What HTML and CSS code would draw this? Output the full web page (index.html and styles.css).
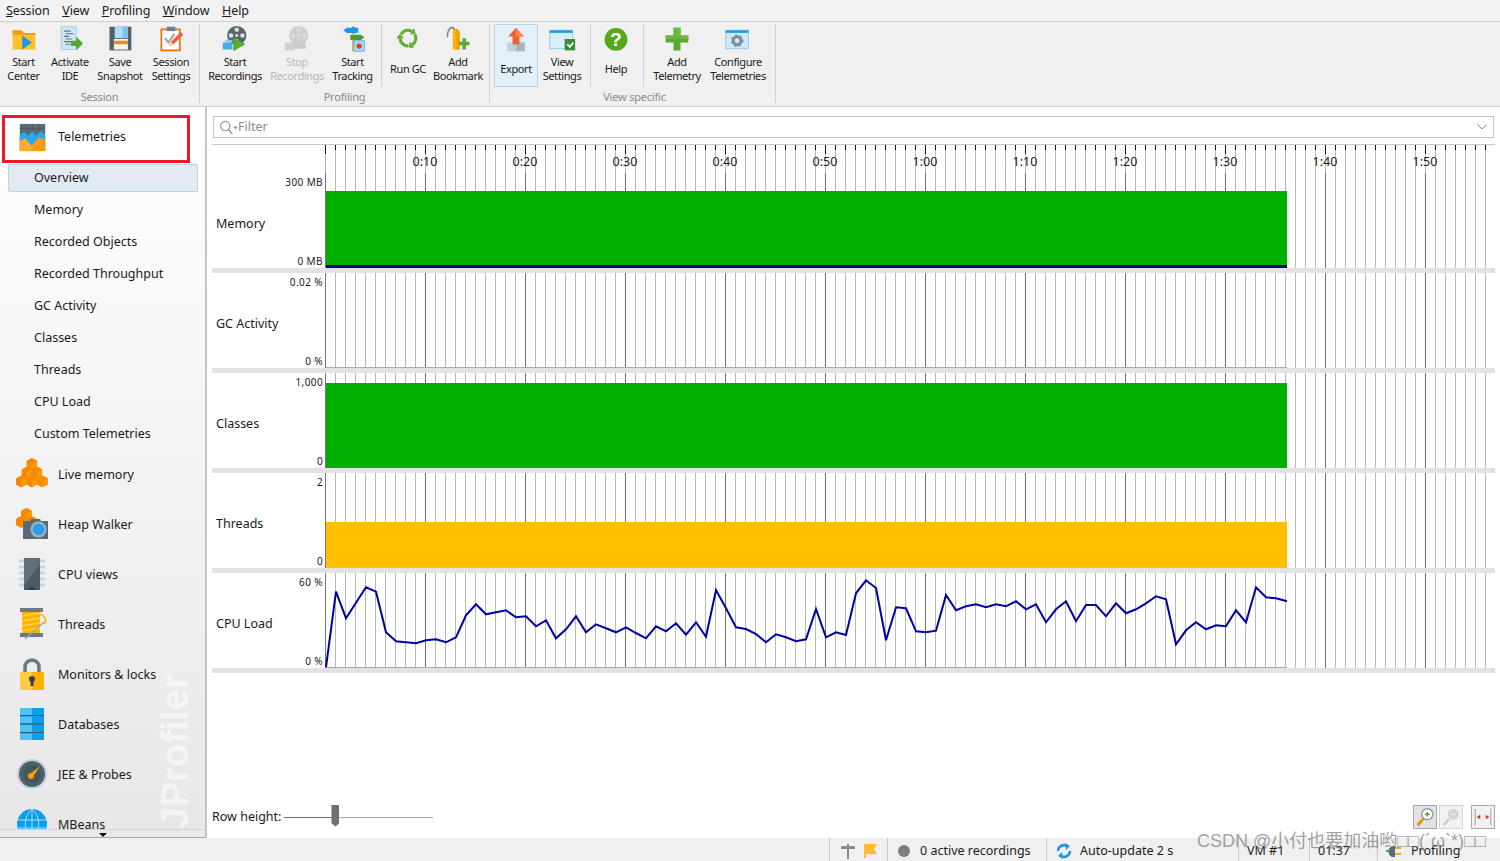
FILE: index.html
```html
<!DOCTYPE html>
<html lang="en">
  <head>
    <meta charset="UTF-8" />
    <title>JProfiler - Telemetries</title>
    <link rel="stylesheet" href="styles.css">
  </head>
  <body>
    <svg class="defs" aria-hidden="true">
      <symbol id="cube" viewBox="0 0 11 12">
        <polygon points="5.5,0 11,3 11,9 5.5,12 0,9 0,3" fill="#ff9a0a" />
        <polygon points="5.5,0 11,3 5.5,6 5.5,12 0,9 0,3" fill="#f58a05" />
      </symbol>
      <symbol id="reel" viewBox="0 0 32 32">
        <circle cx="18" cy="12" r="11" fill="currentColor" />
        <circle cx="18" cy="5.5" r="2.6" fill="#d8dde0" />
        <circle cx="18" cy="18.5" r="2.6" fill="#d8dde0" />
        <circle cx="11.5" cy="12" r="2.6" fill="#d8dde0" />
        <circle cx="24.5" cy="12" r="2.6" fill="#d8dde0" />
        <circle cx="18" cy="12" r="1.8" fill="#d8dde0" />
      </symbol>
      <symbol id="gc-arm" viewBox="0 0 32 32">
        <path d="M8.200 10.500A9 9 0 0 1 20.500 7.200" fill="none" stroke="#63ae2e" stroke-width="3.600" />
        <path d="M24.900 9.700L22.750 3.300 18.250 11.100z" fill="#63ae2e" />
      </symbol>
    </svg>

    <nav class="menubar">
      <span class="menu"><u>S</u>ession</span>
      <span class="menu"><u>V</u>iew</span>
      <span class="menu"><u>P</u>rofiling</span>
      <span class="menu"><u>W</u>indow</span>
      <span class="menu"><u>H</u>elp</span>
    </nav>

    <header class="toolbar">
      <section class="group group-session">
        <div class="tools">
          <div class="tool">
            <svg class="tool-icon" viewBox="0 0 32 32">
              <path d="M3 6h10l3 3h13v19H3z" fill="#fbc02d" />
              <path d="M3 6h10l3 3h13v2H3z" fill="#f59e0b" />
              <path d="M14 12l11 8-11 8z" fill="#1e96e6" />
            </svg>
            <span class="tool-label">Start<br>Center</span>
          </div>
          <div class="tool">
            <svg class="tool-icon" viewBox="0 0 32 32">
              <path d="M6 2h17v26H6z" fill="#cfe8f7" stroke="#9cc7e0" />
              <path d="M9 7h8M11 10h9M9 13h6M11 16h7M9 19h8M11 22h5" stroke="#64747f" stroke-width="1.2" />
              <path d="M17 18h6v-5l8 8-8 8v-5h-6z" fill="#5aa832" />
            </svg>
            <span class="tool-label">Activate<br>IDE</span>
          </div>
          <div class="tool">
            <svg class="tool-icon" viewBox="0 0 32 32">
              <path d="M4 2h25v27H4z" fill="#52616b" />
              <path d="M10 2h15v13H10z" fill="#a9dcf7" />
              <path d="M19 2h6v13h-6z" fill="#7cc6ee" />
              <path d="M9 16h16v12H9z" fill="#f4f4f4" />
              <path d="M9 18h16v4H9z" fill="#f58a05" />
            </svg>
            <span class="tool-label">Save<br>Snapshot</span>
          </div>
          <div class="tool">
            <svg class="tool-icon" viewBox="0 0 32 32">
              <path d="M5 5h21v24H5z" fill="#fff" stroke="#e8730c" stroke-width="2" />
              <path d="M11 2h10v5H11z" fill="#74828c" />
              <path d="M9 15l4 5 7-10" fill="none" stroke="#9aa7b0" stroke-width="2.4" />
              <path d="M14 24l2-5 11-11 3 3-11 11z" fill="#f0603a" />
              <path d="M14 24l2-5 3 3z" fill="#f9d48a" />
            </svg>
            <span class="tool-label">Session<br>Settings</span>
          </div>
        </div>
        <div class="group-name">Session</div>
      </section>

      <section class="group group-profiling">
        <div class="tools">
          <div class="tool">
            <svg class="tool-icon" viewBox="0 0 32 32">
              <use href="#reel" class="reel-dark" width="32" height="32" />
              <path d="M2 20h11v8H2z" fill="#4aa8e8" />
              <path d="M5 17h8v3H5z" fill="#82c8f2" />
              <path d="M14 14l14 8-14 8z" fill="#5aa832" />
            </svg>
            <span class="tool-label">Start<br>Recordings</span>
          </div>
          <div class="tool tool-disabled">
            <svg class="tool-icon" viewBox="0 0 32 32">
              <use href="#reel" class="reel-off" width="32" height="32" />
              <path d="M2 20h11v9H2z" fill="#d0d0d0" />
              <path d="M12 18h14v9H12z" fill="#cbcbcb" />
            </svg>
            <span class="tool-label">Stop<br>Recordings</span>
          </div>
          <div class="tool">
            <svg class="tool-icon" viewBox="0 0 32 32">
              <path d="M15 2h3v8h-3z" fill="#7d6a50" />
              <path d="M5 6l4-3h13v6H9z" fill="#1e96e6" />
              <path d="M13 11h12l4 3-4 3H13z" fill="#4f9a2f" />
              <path d="M15 17h3v13h-3z" fill="#e8a23a" />
              <path d="M17 18h12v12H17z" fill="#a6dcf7" stroke="#4fb0e8" />
              <circle cx="23" cy="24" r="3" fill="#e33b2a" />
            </svg>
            <span class="tool-label">Start<br>Tracking</span>
          </div>
          <i class="tool-sep"></i>
          <div class="tool">
            <svg class="tool-icon" viewBox="0 0 32 32">
              <use href="#gc-arm" width="32" height="32" />
              <use href="#gc-arm" width="32" height="32" transform="rotate(120 16 15)" />
              <use href="#gc-arm" width="32" height="32" transform="rotate(240 16 15)" />
            </svg>
            <span class="tool-label tool-label-mid">Run GC</span>
          </div>
          <div class="tool">
            <svg class="tool-icon" viewBox="0 0 32 32">
              <path d="M4 14c-1-6 3-12 6-11 2 .5 2 3 2 5" fill="none" stroke="#7d8a92" stroke-width="2" />
              <path d="M10 7l4-3 4 3v21h-8z" fill="#ffb300" />
              <path d="M14 4l4 3v21h-4z" fill="#f59e0b" />
              <path d="M18 16h4v-4h4v4h4v4h-4v5h-4v-5h-4z" fill="#5aa832" transform="translate(-1 3)" />
            </svg>
            <span class="tool-label">Add<br>Bookmark</span>
          </div>
        </div>
        <div class="group-name">Profiling</div>
      </section>

      <section class="group group-view">
        <div class="tools">
          <div class="tool tool-active">
            <svg class="tool-icon" viewBox="0 0 32 32">
              <path d="M6 20h20v10H6z" fill="#c5d0d6" />
              <path d="M16 20h10v10H16z" fill="#a8b6bf" />
              <path d="M16 3l9 10h-5v9h-8v-9H7z" fill="#f4602c" />
              <path d="M16 3l9 10h-9z" fill="#f98a4a" />
            </svg>
            <span class="tool-label tool-label-mid">Export</span>
          </div>
          <div class="tool">
            <svg class="tool-icon" viewBox="0 0 32 32">
              <path d="M2 6h26v21H2z" fill="#d8eefa" stroke="#8ccbee" />
              <path d="M2 6h26v3H2z" fill="#1e9be8" />
              <path d="M19 16h12v13H19z" fill="#3a8a3c" />
              <path d="M22 22l3 3 4-5" fill="none" stroke="#fff" stroke-width="2" />
            </svg>
            <span class="tool-label">View<br>Settings</span>
          </div>
          <i class="tool-sep"></i>
          <div class="tool">
            <svg class="tool-icon" viewBox="0 0 32 32">
              <circle cx="16" cy="16.500" r="13" fill="#55a818" />
              <text x="16" y="24" class="help-mark">?</text>
            </svg>
            <span class="tool-label tool-label-mid">Help</span>
          </div>
          <i class="tool-sep"></i>
          <div class="tool">
            <svg class="tool-icon" viewBox="0 0 32 32">
              <path d="M12 3h8v9h9v8h-9v9h-8v-9H3v-8h9z" fill="#5aa832" />
              <path d="M12 3h8v9h9v4H3v-4h9z" fill="#6cb83c" />
            </svg>
            <span class="tool-label">Add<br>Telemetry</span>
          </div>
          <div class="tool">
            <svg class="tool-icon" viewBox="0 0 32 32">
              <path d="M2 6h26v21H2z" fill="#cfe9f9" stroke="#8ccbee" />
              <path d="M2 6h26v3H2z" fill="#1e9be8" />
              <circle cx="15" cy="18" r="4.500" fill="none" stroke="#7c8d98" stroke-width="3.500" />
              <circle cx="15" cy="18" r="6.500" fill="none" stroke="#7c8d98" stroke-width="1.500" stroke-dasharray="2.500 3" />
            </svg>
            <span class="tool-label">Configure<br>Telemetries</span>
          </div>
        </div>
        <div class="group-name">View specific</div>
      </section>
    </header>

    <div class="workspace">
      <aside class="sidebar">
        <div class="nav-head">
          <svg class="nav-icon" viewBox="0 0 32 32">
            <path d="M2 1h28v30H2z" fill="#5b6b75" />
            <path d="M2 13l5-3 4 4 5-5 4 5 5-5 5 3v18H2z" fill="#29a8ee" />
            <path d="M2 20l6-3 7 8 8-9 7 2v13H2z" fill="#ff9a0a" />
            <path d="M2 20l6-3 7 8v6H2z" fill="#ffad33" />
            <path d="M2 6h28M9 1v9M16 1v8M23 1v8" stroke="#4b5962" stroke-width="1" />
          </svg>
          <span>Telemetries</span>
        </div>
        <ul class="sub-list">
          <li class="sub-item sub-item-selected">Overview</li>
          <li class="sub-item">Memory</li>
          <li class="sub-item">Recorded Objects</li>
          <li class="sub-item">Recorded Throughput</li>
          <li class="sub-item">GC Activity</li>
          <li class="sub-item">Classes</li>
          <li class="sub-item">Threads</li>
          <li class="sub-item">CPU Load</li>
          <li class="sub-item">Custom Telemetries</li>
        </ul>
        <ul class="nav-list">
          <li class="nav-item">
            <svg class="nav-icon" viewBox="0 0 32 32">
              <use href="#cube" x="10.500" y="0" width="11" height="12" />
              <use href="#cube" x="5.500" y="8.500" width="11" height="12" />
              <use href="#cube" x="15.500" y="8.500" width="11" height="12" />
              <use href="#cube" x="0" y="17.500" width="11" height="12" />
              <use href="#cube" x="10.500" y="17.500" width="11" height="12" />
              <use href="#cube" x="21" y="17.500" width="11" height="12" />
            </svg>
            <span>Live memory</span>
          </li>
          <li class="nav-item">
            <svg class="nav-icon" viewBox="0 0 32 32">
              <use href="#cube" x="5" y="0" width="11" height="12" />
              <use href="#cube" x="0" y="8" width="11" height="12" />
              <use href="#cube" x="10" y="8" width="11" height="12" />
              <path d="M7 13h7l1-2h9l1 2h7v18H7z" fill="#5b6b75" />
              <circle cx="22.500" cy="21.500" r="8" fill="#aab6bd" />
              <circle cx="22.500" cy="21.500" r="6" fill="#2a9df0" />
            </svg>
            <span>Heap Walker</span>
          </li>
          <li class="nav-item">
            <svg class="nav-icon" viewBox="0 0 32 32">
              <path d="M3 3h26M3 9h26M3 15h26M3 21h26M3 27h26" stroke="#cdd5da" stroke-width="3" />
              <path d="M8 0h16v32H8z" fill="#4c5b65" />
              <path d="M8 28L24 6V0H8z" fill="#5f6e78" />
              <path d="M13 32a3 3 0 0 1 6 0z" fill="#2f3a41" />
            </svg>
            <span>CPU views</span>
          </li>
          <li class="nav-item">
            <svg class="nav-icon" viewBox="0 0 32 32">
              <path d="M4 0h23v4H4zM4 25h23v4H4z" fill="#6a7a84" />
              <path d="M6 4h18v21H6z" fill="#ffb300" />
              <path d="M6 8l18-3M6 13l18-3M6 18l18-3M6 23l18-3" stroke="#ffd54f" stroke-width="1.500" />
              <path d="M9 31L28 14" stroke="#9aa7b0" stroke-width="1.500" />
              <path d="M24 6c6 2 7 8 4 10" fill="none" stroke="#ffb300" stroke-width="1.500" />
            </svg>
            <span>Threads</span>
          </li>
          <li class="nav-item">
            <svg class="nav-icon" viewBox="0 0 32 32">
              <path d="M9 15V9a7 7 0 0 1 14 0v6" fill="none" stroke="#6a7a84" stroke-width="3.500" />
              <path d="M4 14h24v18H4z" fill="#ffb300" />
              <path d="M4 14h12v18H4z" fill="#ffcc40" />
              <circle cx="16" cy="21" r="3" fill="#37424a" />
              <path d="M14.500 22h3v6h-3z" fill="#37424a" />
            </svg>
            <span>Monitors &amp; locks</span>
          </li>
          <li class="nav-item">
            <svg class="nav-icon" viewBox="0 0 32 32">
              <path d="M4 0h24v32H4z" fill="#0f9ce8" />
              <path d="M4 0h12v7H4zM4 8.500h12v7H4zM4 17h12v7H4zM4 25.500h12V32H4z" fill="#4fc3f7" />
              <path d="M4 7.500h24M4 16h24M4 24.500h24" stroke="#37576b" stroke-width="1" />
            </svg>
            <span>Databases</span>
          </li>
          <li class="nav-item">
            <svg class="nav-icon" viewBox="0 0 32 32">
              <circle cx="16" cy="16" r="15" fill="#c5d0d6" />
              <circle cx="16" cy="16" r="13" fill="#50606a" />
              <circle cx="16" cy="16" r="9" fill="#445560" />
              <path d="M13 17l11-9-7 11z" fill="#ffa000" />
              <circle cx="15" cy="18" r="3" fill="#ffa000" />
            </svg>
            <span>JEE &amp; Probes</span>
          </li>
          <li class="nav-item">
            <svg class="nav-icon" viewBox="0 0 32 32">
              <circle cx="16" cy="16" r="15" fill="#0f9ce8" />
              <path d="M1 12h30M1 20h30M16 1v30M16 1c-9 8-9 22 0 30M16 1c9 8 9 22 0 30" fill="none" stroke="#a9def8" stroke-width="1" />
            </svg>
            <span>MBeans</span>
          </li>
        </ul>
        <div class="brand-mark">JProfiler</div>
        <div class="nav-more"><i class="nav-more-arrow"></i></div>
      </aside>

      <main class="content">
        <div class="filter">
          <svg class="filter-icon" viewBox="0 0 20 16">
            <circle cx="6.500" cy="6.500" r="5" fill="none" stroke="#8c9aa3" stroke-width="1.200" />
            <path d="M10 10l4 5" stroke="#8c9aa3" stroke-width="1.500" />
            <path d="M15 7h5l-2.500 3z" fill="#8c9aa3" />
          </svg>
          <span class="filter-text">Filter</span>
          <svg class="filter-chevron" viewBox="0 0 10 6">
            <path d="M.5.500L5 5 9.500.500" fill="none" stroke="#8a8a8a" stroke-width="1" />
          </svg>
        </div>

        <div class="chart">
          <div class="ruler-row">
            <div class="ruler">
              <span class="time">0:10</span><span class="time">0:20</span><span class="time">0:30</span><span class="time">0:40</span><span class="time">0:50</span><span class="time">1:00</span><span class="time">1:10</span><span class="time">1:20</span><span class="time">1:30</span><span class="time">1:40</span><span class="time">1:50</span>
            </div>
          </div>

          <div class="row">
            <div class="row-head">
              <span class="scale">300 MB</span>
              <span class="row-name">Memory</span>
              <span class="scale">0 MB</span>
            </div>
            <div class="lane"><div class="bar bar-memory"></div></div>
          </div>

          <div class="row">
            <div class="row-head">
              <span class="scale">0.02 %</span>
              <span class="row-name">GC Activity</span>
              <span class="scale">0 %</span>
            </div>
            <div class="lane"><div class="baseline"></div></div>
          </div>

          <div class="row">
            <div class="row-head">
              <span class="scale">1,000</span>
              <span class="row-name">Classes</span>
              <span class="scale">0</span>
            </div>
            <div class="lane"><div class="bar bar-classes"></div></div>
          </div>

          <div class="row">
            <div class="row-head">
              <span class="scale">2</span>
              <span class="row-name">Threads</span>
              <span class="scale">0</span>
            </div>
            <div class="lane"><div class="bar bar-threads"></div></div>
          </div>

          <div class="row">
            <div class="row-head">
              <span class="scale">60 %</span>
              <span class="row-name">CPU Load</span>
              <span class="scale">0 %</span>
            </div>
            <div class="lane">
              <svg class="cpu-line" viewBox="0 0 1170 95">
                <path d="M1 94.500H962" stroke="#80cc80" stroke-width="1" />
                <polyline fill="none" stroke="#0000aa" stroke-width="2" points="1,94 11,18.700 21,45.300 31,29.700 41,14.300 51,18.700 61,59.300 71,68.300 81,69.300 91,70.300 101,67.300 111,66.300 121,69.300 131,64.300 141,42.300 151,31.300 161,41.300 171,39.300 181,37.300 191,44.300 201,43.300 211,53.300 221,47.300 231,65.300 241,56.300 251,43.300 261,59.300 271,51.300 281,55.300 291,59.300 301,54.300 311,60 321,65.300 331,53.300 341,58.300 351,50.300 361,61.700 371,49.300 381,63.700 391,17 401,35.300 411,54.300 421,56 431,61 441,69.300 451,61.300 461,64.300 471,68.300 481,66.300 491,36 501,64.300 511,59.300 521,62 531,20.300 541,7.300 551,15 561,67.300 571,34.300 581,35.300 591,58.300 601,59.300 611,57.700 621,22 631,37.300 641,33.300 651,31.300 661,34.300 671,31.300 681,33.300 691,28.300 701,36.300 711,31.300 721,49.300 731,36.300 741,28.300 751,48.300 761,32 771,32 781,43.300 791,30.300 801,40.300 811,36.300 821,30.300 831,23.300 841,26.300 851,71.300 861,57.300 871,49.300 881,56.300 891,52.300 901,53.300 911,37.300 921,49.300 931,14.300 941,24.300 951,25.300 962,28.300" />
              </svg>
            </div>
          </div>
        </div>

        <div class="chart-footer">
          <span class="row-height">Row height:</span>
          <div class="slider"><i class="slider-done"></i><i class="slider-thumb"></i></div>
          <div class="zoom-buttons">
            <button class="zoom-btn" type="button">
              <svg viewBox="0 0 24 24">
                <circle cx="14.500" cy="9" r="6" fill="#fff" stroke="#8c9aa3" stroke-width="1.500" />
                <path d="M12 9h5M14.500 6.500v5" stroke="#4aa02c" stroke-width="1.500" />
                <path d="M4 21l6-7" stroke="#f08c00" stroke-width="3" />
              </svg>
            </button>
            <button class="zoom-btn zoom-btn-off" type="button">
              <svg viewBox="0 0 24 24">
                <circle cx="14.500" cy="9" r="6" fill="#d4d4d4" />
                <path d="M12 9h5" stroke="#f2f2f2" stroke-width="1.500" />
                <path d="M4 21l6-7" stroke="#cfcfcf" stroke-width="3" />
              </svg>
            </button>
            <button class="zoom-btn zoom-btn-fit" type="button">
              <svg viewBox="0 0 24 24">
                <path d="M3.500 3v18M20.500 3v18" stroke="#8c9aa3" stroke-width="1" />
                <path d="M5 12l4-2.500v5zM19 12l-4-2.500v5z" fill="#d8352a" />
              </svg>
            </button>
          </div>
        </div>
      </main>
    </div>

    <footer class="statusbar">
      <div class="cell cell-marks">
        <svg class="status-icon" viewBox="0 0 16 16">
          <path d="M1 3h6V1h2v2h6v3H9v10H7V6H1z" fill="#8a8a8a" />
        </svg>
        <svg class="status-icon" viewBox="0 0 16 16">
          <path d="M2 1h13l-3 5 3 5H4v4H2z" fill="#fdbb2d" />
        </svg>
      </div>
      <div class="cell cell-recordings"><i class="rec-dot"></i><span>0 active recordings</span></div>
      <div class="cell cell-update">
        <svg class="status-icon" viewBox="0 0 16 16">
          <path d="M2 8a6 6 0 0 1 9-5" fill="none" stroke="#1e96e6" stroke-width="2.500" />
          <path d="M14 8a6 6 0 0 1-9 5" fill="none" stroke="#1e96e6" stroke-width="2.500" />
          <path d="M9 0l5 3-4 4zM7 16l-5-3 4-4z" fill="#1e96e6" />
        </svg>
        <span>Auto-update 2 s</span>
      </div>
      <div class="cell cell-vm">VM #1</div>
      <div class="cell cell-time">01:37</div>
      <div class="cell cell-mode">
        <svg class="status-icon" viewBox="0 0 16 16">
          <path d="M6 3a6 6 0 0 0 0 11h3V3z" fill="#5b6b75" />
          <path d="M9 5h6M9 11h6" stroke="#e8a23a" stroke-width="2" />
          <path d="M0 8h4" stroke="#5aa832" stroke-width="2" />
        </svg>
        <span>Profiling</span>
      </div>
    </footer>

    <div class="watermark">CSDN @小付也要加油哟□□(´ω`*)□□</div>
  </body>
</html>
```

FILE: styles.css
```css
html, body {
  margin: 0;
  padding: 0;
}
body {
  position: relative;
  width: 1500px;
  height: 861px;
  overflow: hidden;
  display: flex;
  flex-direction: column;
  background-color: #f0f0f0;
  color: #1a1a1a;
  font-family: "Noto Sans", "Noto Sans CJK SC", sans-serif;
  font-size: 12.5px;
}
.defs {
  width: 0;
  height: 0;
  position: absolute;
}
.reel-dark { color: #56656f; }
.reel-off { color: #cfcfcf; }
ul {
  list-style: none;
  margin: 0;
  padding: 0;
}

/* menu */
.menubar {
  height: 21px;
  display: flex;
  align-items: center;
  gap: 12.5px;
  padding-left: 6px;
  font-size: 12.5px;
  letter-spacing: -0.1px;
  background-color: #f2f2f2;
  border-bottom: 1px solid #cfcfcf;
}

/* toolbar */
.toolbar {
  height: 84px;
  display: flex;
  background-color: #f0f0f0;
  border-bottom: 1px solid #cfcfcf;
  font-size: 11px;
  padding-top: 2px;
}
.group {
  display: flex;
  flex-direction: column;
  height: 79px;
  box-sizing: border-box;
  border-right: 1px solid #d0d0d0;
}
.group-session { width: 200px; }
.group-profiling { width: 290px; }
.group-view { width: 286px; padding-left: 4px; }
.tools {
  display: grid;
  grid-auto-flow: column;
  height: 63px;
}
.group-session .tools { grid-template-columns: 47px 46px 54px 48px; }
.group-profiling .tools { grid-template-columns: 70px 54px 57px 1px 52px 48px; }
.group-view .tools { grid-template-columns: 44px 48px 5px 50px 3px 66px 56px; }
.tool {
  display: flex;
  flex-direction: column;
  align-items: center;
  box-sizing: border-box;
  height: 63px;
  border: 1px solid transparent;
  white-space: nowrap;
}
.tool-icon {
  width: 28px;
  height: 28px;
  flex: none;
}
.tool-label {
  display: block;
  margin-top: 2px;
  line-height: 14px;
  height: 28px;
  text-align: center;
  letter-spacing: -0.4px;
}
.tool-label-mid {
  line-height: 28px;
}
.tool-disabled { color: #b8b8b8; }
.tool-active {
  background-color: #e3f0fa;
  border-color: #b5d3ea;
}
.tool-sep {
  justify-self: end;
  width: 1px;
  height: 63px;
  background-color: #d0d0d0;
}
.help-mark {
  fill: #fff;
  font-family: "Liberation Sans", sans-serif;
  font-size: 22px;
  font-weight: bold;
  text-anchor: middle;
}
.group-name {
  height: 16px;
  line-height: 20px;
  text-align: center;
  color: #8a8a8a;
  letter-spacing: -0.2px;
}

/* side navigation */
.workspace {
  height: 731px;
  display: flex;
  flex: none;
}
.sidebar {
  position: relative;
  width: 207px;
  flex: none;
  box-sizing: border-box;
  overflow: hidden;
  border-right: 2px solid #c4c4c4;
  background: linear-gradient(#ffffff, #e7e7e7);
}
.nav-head {
  display: flex;
  align-items: center;
  gap: 11px;
  box-sizing: border-box;
  width: 188px;
  height: 48px;
  margin: 8px 0 0 2px;
  padding: 0 0 3px 13px;
  border: 3px solid #ed1c24;
}
.nav-head span {
  margin-top: -2px;
}
.nav-icon {
  width: 29px;
  height: 29px;
  flex: none;
}
.sub-item {
  height: 32px;
  line-height: 34px;
  padding-left: 34px;
}
.sub-item-selected {
  height: 28px;
  line-height: 26px;
  margin: 1px 8px 1px 8px;
  padding-left: 25px;
  box-sizing: border-box;
  width: 190px;
  background-color: #e2ebf4;
  border: 1px solid #b9d3e8;
  border-radius: 2px;
}
.nav-item {
  height: 50px;
  display: flex;
  align-items: center;
  gap: 10px;
  padding-left: 17px;
}
.nav-item .nav-icon {
  width: 32px;
  height: 32px;
  margin-left: -1px;
}
.brand-mark {
  position: absolute;
  left: 149px;
  top: 567px;
  writing-mode: vertical-rl;
  transform: rotate(180deg);
  font-family: "Liberation Sans", sans-serif;
  font-size: 38px;
  line-height: 52px;
  font-weight: bold;
  color: rgba(255, 255, 255, 0.55);
}
.nav-more {
  position: absolute;
  left: 0;
  right: 0;
  bottom: 0;
  height: 7px;
  background-color: #e9e9e9;
  border-top: 1px solid #d4d4d4;
  border-bottom: 1px solid #a8a8a8;
}
.nav-more-arrow {
  position: absolute;
  left: 99px;
  top: 3px;
  border-left: 4px solid transparent;
  border-right: 4px solid transparent;
  border-top: 4px solid #111;
}

/* content */
.content {
  flex: 1;
  display: flex;
  flex-direction: column;
  padding: 9px 5px 5px 5px;
  background-color: #fff;
  min-width: 0;
}
.filter {
  display: flex;
  align-items: center;
  box-sizing: border-box;
  height: 22px;
  margin: 0 1px;
  padding: 0 6px 0 5px;
  border: 1px solid #c4c4c4;
}
.filter-icon {
  width: 19px;
  height: 15px;
}
.filter-text {
  margin: -2px 0 0 0;
  color: #8a8a8a;
}
.filter-chevron {
  width: 10px;
  height: 6px;
  margin-left: auto;
}
.chart {
  margin-top: 6px;
  border-top: 1px solid #c8c8c8;
}
.ruler-row {
  padding-left: 113px;
}
.ruler {
  display: flex;
  height: 28px;
  padding-left: 50px;
  box-sizing: border-box;
  background:
    repeating-linear-gradient(to right, #111 0 1px, transparent 1px 100px) 0 0 / 1161px 9px no-repeat,
    repeating-linear-gradient(to right, #111 0 1px, transparent 1px 10px) 0 0 / 1161px 5px no-repeat,
    repeating-linear-gradient(to right, #b8b8b8 0 1px, transparent 1px 10px) 0 0 / 1161px 100% no-repeat;
}
.time {
  width: 100px;
  text-align: center;
  line-height: 33px;
  font-size: 12.5px;
}
.row {
  display: flex;
  height: 100px;
  box-sizing: border-box;
  border-bottom: 5px solid #e2e2e2;
}
.row-head {
  width: 113px;
  flex: none;
  display: flex;
  flex-direction: column;
  padding-top: 2px;
  box-sizing: border-box;
}
.scale {
  height: 14px;
  line-height: 14px;
  text-align: right;
  padding-right: 2px;
  font-size: 10px;
  letter-spacing: 0.4px;
}
.row-name {
  flex: 1;
  display: flex;
  align-items: center;
  padding: 3px 0 0 4px;
}
.lane {
  flex: 1;
  display: flex;
  align-items: flex-end;
  background:
    linear-gradient(#777, #777) 0 0 / 1px 100% no-repeat,
    repeating-linear-gradient(to right, #747474 0 1px, transparent 1px 100px) 0 0 / 1161px 100% no-repeat,
    repeating-linear-gradient(to right, #b8b8b8 0 1px, transparent 1px 10px) 0 0 / 1161px 100% no-repeat;
}
.bar {
  width: 961px;
  margin-left: 1px;
  box-sizing: border-box;
}
.bar-memory {
  height: 77px;
  background-color: #00b000;
  border-bottom: 3px solid #000090;
}
.bar-classes {
  height: 85px;
  background-color: #00b000;
}
.bar-threads {
  height: 46px;
  background-color: #ffc000;
}
.baseline {
  width: 961px;
  height: 1px;
  margin-left: 1px;
  background-color: #80cc80;
}
.cpu-line {
  display: block;
  width: 1170px;
  height: 95px;
}

/* bottom of the chart */
.chart-footer {
  margin-top: auto;
  height: 32px;
  display: flex;
  align-items: center;
}
.row-height {
  margin-top: -1px;
}
.slider {
  position: relative;
  width: 149px;
  height: 1px;
  margin-left: 3px;
  background-color: #a8a8a8;
}
.slider-done {
  display: block;
  width: 50px;
  height: 1px;
  background-color: #707070;
}
.slider-thumb {
  position: absolute;
  left: 47px;
  top: -12px;
  width: 8px;
  height: 22px;
  background-color: #707070;
  clip-path: polygon(0 0, 100% 0, 100% 85%, 50% 100%, 0 85%);
}
.zoom-buttons {
  margin-left: auto;
  display: flex;
  gap: 2px;
  padding-bottom: 1px;
}
.zoom-btn {
  width: 24px;
  height: 24px;
  padding: 0;
  border: 1px solid #a8a8a8;
  background-color: #e2e2e2;
  box-sizing: border-box;
}
.zoom-btn svg {
  display: block;
  width: 22px;
  height: 22px;
}
.zoom-btn-off {
  background-color: #f2f2f2;
  border-color: #d4d4d4;
}
.zoom-btn-fit {
  margin-left: 6px;
  background-color: #f2f2f2;
}

/* status bar */
.statusbar {
  flex: 1;
  display: flex;
  justify-content: flex-end;
  background-color: #f0f0f0;
}
.cell {
  display: flex;
  align-items: center;
  box-sizing: border-box;
  border-left: 1px solid #c8c8c8;
  height: 23px;
  padding-top: 2px;
}
.cell-marks { width: 58px; padding-left: 10px; gap: 6px; }
.cell-recordings { width: 159px; padding-left: 10px; gap: 10px; }
.cell-update { width: 192px; padding-left: 9px; gap: 8px; }
.cell-vm { width: 71px; padding-left: 8px; }
.cell-time { width: 68px; padding-left: 8px; }
.cell-mode { width: 123px; padding-left: 8px; gap: 9px; }
.status-icon {
  width: 16px;
  height: 16px;
}
.rec-dot {
  width: 12px;
  height: 12px;
  border-radius: 50%;
  background-color: #7d7d7d;
}
.watermark {
  position: absolute;
  left: 1197px;
  top: 829px;
  font-family: "Liberation Sans", "Noto Sans CJK SC", sans-serif;
  font-size: 18px;
  line-height: 24px;
  white-space: nowrap;
  color: rgba(110, 110, 110, 0.65);
}
```
